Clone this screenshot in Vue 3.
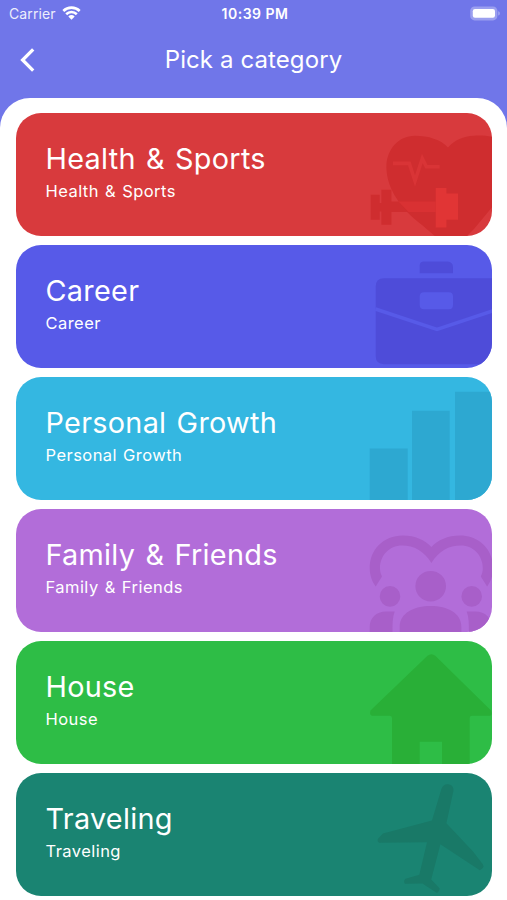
<template>
  <div class="screen">
    <div class="status-bar">
      <div class="status-left">
        <span class="carrier">Carrier</span>
        <svg class="wifi" viewBox="0 0 19 14">
          <path d="M1.3 5a11.6 11.6 0 0 1 16.4 0" />
          <path d="M4.2 8.2a7.6 7.6 0 0 1 10.6 0" />
          <path class="dot" d="M6.3 10.6a4.7 4.7 0 0 1 6.4 0L9.5 13.8z" />
        </svg>
      </div>
      <span class="time">10:39 PM</span>
      <div class="status-right">
        <svg class="battery" viewBox="0 0 31 15">
          <rect class="shell" x="0.2" y="0.4" width="27.2" height="14" rx="4.4" />
          <rect class="level" x="2.8" y="3" width="22.2" height="8.8" rx="2.2" />
          <path class="cap" d="M28.2 5.2c2.2 .6 2.2 3.8 0 4.4z" />
        </svg>
      </div>
    </div>

    <header class="nav-bar">
      <button class="back" type="button" aria-label="Back">
        <svg viewBox="0 0 16 26">
          <path d="M14.2 2.4 3.6 13l10.6 10.6" />
        </svg>
      </button>
      <h1 class="nav-title">Pick a category</h1>
    </header>

    <main class="sheet">
      <div
        class="category"
        v-for="category in categories"
        :key="category.id"
        :class="category.id"
      >
        <h2 class="category-title">{{ category.title }}</h2>
        <p class="category-subtitle">{{ category.subtitle }}</p>
        <svg class="category-icon" viewBox="0 0 130 122.4">
          <path
            v-for="(shape, index) in category.shapes"
            :key="index"
            :class="shape.type"
            :d="shape.d"
          />
        </svg>
      </div>
    </main>
  </div>
</template>

<script setup>
// shape types: fill = dark shape, light = highlighted shape, line = stroke
const categories = [
  {
    id: 'health',
    title: 'Health & Sports',
    subtitle: 'Health & Sports',
    shapes: [
      {
        type: 'fill',
        d: 'M86 34.4C79 26.5 66 22.7 53 22.7C36 22.7 24.4 37 24.4 54C24.4 76 40 97 60 112L74 124H104L112 116L131 93V24C125 22.7 119 22.4 112 22.7C101 23 93 27 86 34.4Z',
      },
      {
        type: 'fill',
        d: 'M8.7 81.7H17.7V106.7H8.7ZM19.4 76.7H29.4V111.7H19.4ZM17.7 90H19.4V98.5H17.7ZM29.4 88.4H36.5L46.5 99H29.4Z',
      },
      {
        type: 'light',
        d: 'M36.5 88.4H73.7V99H46.5Z',
      },
      {
        type: 'light plates',
        d: 'M73.7 75H84.4V80.5H96V106.7H84.4V114.4H73.7Z',
      },
      { type: 'line', d: 'M31 50.4H47.3L53 68L60.3 45.5L64.4 53.7H77.7' },
    ],
  },
  {
    id: 'career',
    title: 'Career',
    subtitle: 'Career',
    shapes: [
      {
        type: 'fill',
        d: 'M57.7 28.2V20.5Q57.7 16.5 62 16.5H85.5Q91 17 91 22V28.2Z',
      },
      {
        type: 'fill',
        d: 'M22 33.2H131V119.2H22Q13.7 119 13.7 111V41.5Q13.7 33.2 22 33.2ZM62 47.2Q57.7 47.2 57.7 51.5V60Q57.7 64.2 62 64.2H87Q91 64.2 91 60V51.5Q91 47.2 87 47.2Z',
      },
      { type: 'line', d: 'M13.4 64L75 84.4L131 65.8' },
    ],
  },
  {
    id: 'growth',
    title: 'Personal Growth',
    subtitle: 'Personal Growth',
    shapes: [
      {
        type: 'fill',
        d: 'M7.7 71.5H45.7V123H7.7ZM50 33.8H87.7V123H50ZM93 14.8H131V123H93Z',
      },
    ],
  },
  {
    id: 'family',
    title: 'Family & Friends',
    subtitle: 'Family & Friends',
    shapes: [
      {
        type: 'fill',
        d: 'M13.7 77.5C9.5 72 7.7 65 7.7 59C7.7 41 21 26.5 41 26.5C53 26.5 63 31 69.4 38C75.8 31 85.8 26.5 97.8 26.5C117.8 26.5 131.1 41 131.1 59C131.1 65 129.3 72 125.1 77.5L118.8 67.5C120.3 64.5 120.8 62 120.8 59C120.8 47 111.8 36.5 98.8 36.5C86.8 36.5 76.8 42 69.4 54C62 42 52 36.5 40 36.5C27 36.5 18 47 18 59C18 62 18.5 64.5 20 67.5Z',
      },
      {
        type: 'fill',
        d: 'M53.4 77.2a15.3 15.3 0 1 0 30.6 0a15.3 15.3 0 1 0 -30.6 0ZM17.7 87.4a10.3 10.3 0 1 0 20.6 0a10.3 10.3 0 1 0 -20.6 0ZM99.4 87.4a10.3 10.3 0 1 0 20.6 0a10.3 10.3 0 1 0 -20.6 0Z',
      },
      {
        type: 'fill',
        d: 'M37.7 123V118C37.7 104 52 97.1 68.7 97.1C85.4 97.1 99.4 104 99.4 118V123ZM7.7 123V118C7.7 109 14 102.5 24 102.5H32.7C30.5 108 30.5 115 30.5 123ZM129.7 123V118C129.7 109 123.4 102.5 113.4 102.5H104.7C106.9 108 106.9 115 106.9 123Z',
      },
    ],
  },
  {
    id: 'house',
    title: 'House',
    subtitle: 'House',
    shapes: [
      {
        type: 'fill',
        d: 'M65.5 14.8Q69.4 11.6 73.3 14.8L129 69.5Q131 74.8 127 74.8H110Q107.7 74.8 107.7 77V123H80V100.8H57.7V123H30V77Q30 74.8 27.5 74.8H11Q7 74.8 8.5 69.5Z',
      },
    ],
  },
  {
    id: 'traveling',
    title: 'Traveling',
    subtitle: 'Traveling',
    shapes: [
      {
        type: 'fill',
        d: 'M79.4 16C80.5 12.5 83 11 86 11.2C90 11.5 92 14.5 91.4 18L84.4 50.3L111 78.5L121 91.5Q122.3 93.5 120.6 95.2L117.8 97.3L78.4 71.3L69.2 106.5L77.7 115.5Q77.5 118.5 75 120L60.4 110.5L43 110.8Q41 108 43.5 105.8L57.3 101.8L65 69.3L17 69.8Q14.8 68.3 15.8 66L21 60.5L70 47.5Z',
      },
    ],
  },
];
</script>

<style>
body {
  background-color: #7076e9;
}
</style>

<style scoped>
.screen {
  display: flex;
  flex-direction: column;
  height: 900px;
  overflow: hidden;
  background-color: #7076e9;
  color: #ffffff;
  font-family: Inter, 'Liberation Sans', sans-serif;
}

.status-bar {
  display: grid;
  grid-template-columns: 1fr auto 1fr;
  align-items: center;
  height: 27px;
  padding: 0 6px 0 9px;
  font-size: 14px;
}

.status-left {
  display: flex;
  align-items: center;
  gap: 6px;
}

.carrier {
  letter-spacing: 0.1px;
  opacity: 0.88;
}

.wifi {
  width: 19px;
  height: 14px;
  margin-top: -2px;
  fill: none;
  stroke: #ffffff;
  stroke-width: 2.6;
}

.wifi .dot {
  fill: #ffffff;
  stroke: none;
}

.time {
  font-size: 14px;
  font-weight: 600;
  letter-spacing: 0.5px;
}

.status-right {
  display: flex;
  justify-content: flex-end;
}

.battery {
  width: 31px;
  height: 15px;
}

.battery .shell {
  fill: #ffffff;
  fill-opacity: 0.3;
}

.battery .level {
  fill: #ffffff;
}

.battery .cap {
  fill: #ffffff;
  fill-opacity: 0.35;
}

.nav-bar {
  display: grid;
  grid-template-columns: 60px 1fr 60px;
  align-items: center;
  height: 66px;
}

.back {
  display: flex;
  padding: 0 0 0 19px;
  border: none;
  background: none;
}

.back svg {
  width: 16px;
  height: 26px;
  fill: none;
  stroke: #ffffff;
  stroke-width: 3.3;
}

.nav-title {
  margin: 0;
  font-size: 24px;
  font-weight: 400;
  line-height: 30px;
  letter-spacing: 0.1px;
  text-align: center;
}

.sheet {
  display: flex;
  flex: 1;
  flex-direction: column;
  gap: 9.6px;
  margin-top: 5.4px;
  padding: 14.8px 14.9px 0 15.5px;
  border-radius: 30px 30px 0 0;
  background-color: #ffffff;
}

.category {
  position: relative;
  flex: none;
  box-sizing: border-box;
  height: 122.4px;
  padding: 28px 30px 0;
  border-radius: 25px;
  overflow: hidden;
}

.category-title {
  margin: 0;
  font-size: 28.8px;
  font-weight: 400;
  line-height: 36px;
  letter-spacing: 0.3px;
  word-spacing: 1.8px;
}

.category-subtitle {
  margin: 4px 0 0;
  font-size: 16.5px;
  font-weight: 400;
  line-height: 20px;
  letter-spacing: 0.45px;
  word-spacing: 1px;
}

/* the artwork sits against the right edge and is clipped by the card */
.category-icon {
  position: absolute;
  top: 0;
  right: 0;
  width: 130px;
  height: 122.4px;
}

.fill {
  fill-rule: evenodd;
}

.line {
  fill: none;
  stroke-width: 3.6;
}

.health {
  background-color: #d83a3d;
}

.health .fill {
  fill: #cf2d2f;
}

.health .light {
  fill: #d93133;
}

.health .plates {
  fill: #e13535;
}

.health .line {
  stroke: #d93436;
}

.career {
  background-color: #575ae8;
}

.career .fill {
  fill: #4e4cd9;
}

.career .line {
  stroke: #575ae8;
}

.growth {
  background-color: #34b7e1;
}

.growth .fill {
  fill: #2da8d1;
}

.family {
  background-color: #b26dd9;
}

.family .fill {
  fill: #a85fc9;
}

.house {
  background-color: #2ebd46;
}

.house .fill {
  fill: #29af37;
}

.traveling {
  background-color: #1a8472;
}

.traveling .fill {
  fill: #197967;
}
</style>
